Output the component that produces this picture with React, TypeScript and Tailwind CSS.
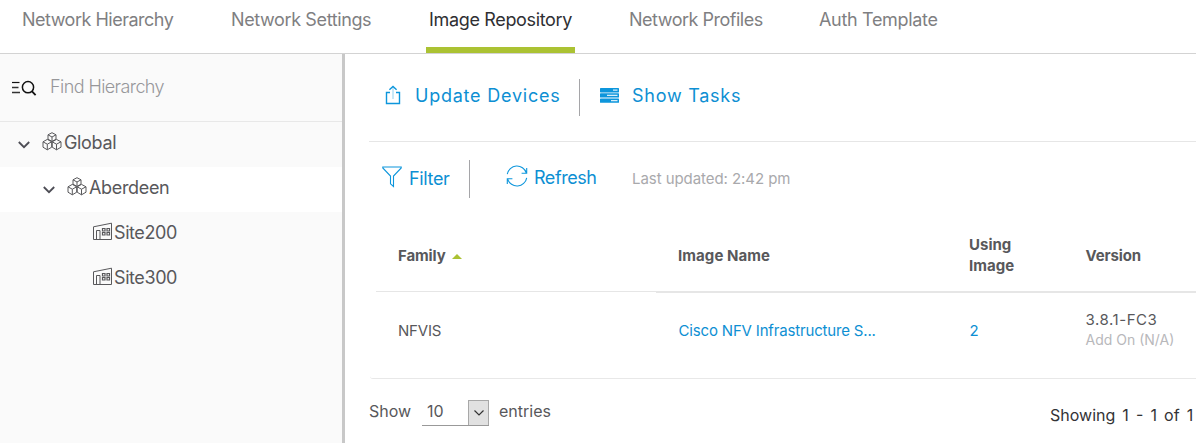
import React from "react";

const tabs = [
  { label: "Network Hierarchy", box: "w-[209px]", tracking: "tracking-[-0.5px]" },
  { label: "Network Settings", box: "w-[198px]", tracking: "tracking-[-0.38px]" },
  { label: "Image Repository", box: "w-[200px]", tracking: "tracking-[-0.34px]", active: true },
  { label: "Network Profiles", box: "w-[190px]", tracking: "tracking-[-0.49px]" },
  { label: "Auth Template", box: "w-[140px]", tracking: "tracking-[-0.32px]" },
];

function SearchListIcon() {
  return (
    <svg width="26" height="18" viewBox="0 0 26 18" fill="none" stroke="#111" strokeWidth="1.5">
      <path d="M1 3.5H8.5" strokeWidth="1.2" />
      <path d="M1 8.5H7.5M1 13.5H9" strokeWidth="1.4" stroke="#333" />
      <circle cx="17" cy="8.2" r="5.6" />
      <path d="M20.8 12.2L24.6 16.2" strokeWidth="1.8" />
    </svg>
  );
}

function CubesIcon() {
  return (
    <svg width="20" height="19" viewBox="0 0 20 19" fill="none" stroke="#58585b" strokeWidth="1" strokeLinejoin="round">
      <path d="M10 .7L14 2.8V7.2L10 9.4L6 7.2V2.8ZM6 2.8L10 5L14 2.8M10 5V9.4" />
      <path d="M5.3 7.4L9.7 9.8V15.2L5.3 17.8L1 15.2V9.8ZM1 9.8L5.3 12.2L9.7 9.8M5.3 12.2V17.8" />
      <path d="M14.5 7.4L19 9.8V15.2L14.5 17.8L10.2 15.2V9.8ZM10.2 9.8L14.5 12.2L19 9.8M14.5 12.2V17.8" />
    </svg>
  );
}

function SiteIcon() {
  return (
    <svg className="ml-px" width="19" height="18" viewBox="0 0 19 18" fill="none" stroke="#58585b" strokeWidth="1">
      <path d="M.5 4.8L18.5 1.2V17.5H.5Z" />
      <path d="M3.5 17.5V8.5H7V17.5" />
      <path d="M9.5 6.5H12V9H9.5ZM14 6.5H16.5V9H14ZM9.5 10.5H12V13H9.5ZM14 10.5H16.5V13H14Z" strokeWidth="1.2" />
    </svg>
  );
}

function Caret() {
  return (
    <svg width="12" height="8" viewBox="0 0 12 8" fill="none" stroke="#4d4d55" strokeWidth="1.8">
      <path d="M.8 1L6 6.2L11.2 1" />
    </svg>
  );
}

function UpdateIcon() {
  return (
    <svg width="16" height="20" viewBox="0 0 16 20" fill="none" stroke="#0d96dc">
      <path d="M5 7.5H1.5V18.5H14.5V7.5H11" strokeWidth="1.4" />
      <path d="M4.4 4.8L8 1.4L11.6 4.8" strokeWidth="1.4" />
      <path d="M8 2V14" strokeWidth="1" strokeOpacity=".45" />
    </svg>
  );
}

function TasksIcon() {
  return (
    <svg width="19" height="15" viewBox="0 0 19 15" fill="#0d96dc">
      <rect width="19" height="4.4" y="0" rx=".6" />
      <rect width="19" height="4.4" y="5.2" rx=".6" />
      <rect width="19" height="4.4" y="10.4" rx=".6" />
      <path d="M13 1.6H17.5V2.8H13ZM7 6.8H17.5V8H7ZM11 12H17.5V13.2H11Z" fill="#d9effa" />
    </svg>
  );
}

function FilterIcon() {
  return (
    <svg width="20" height="22" viewBox="0 0 20 22" fill="none" stroke="#0d96dc" strokeWidth="1.1">
      <path d="M.8 1H19.2V2L11.5 10V20.5L8.5 17.8V10L.8 2Z" />
    </svg>
  );
}

function RefreshIcon() {
  return (
    <svg width="22" height="22" viewBox="0 0 22 22" fill="none" stroke="#0d96dc" strokeWidth="1.1">
      <path d="M1.3 9.2A9.8 9.8 0 0 1 20.3 7.8M20.7 3V8.2H15.6" />
      <path d="M20.7 12.8A9.8 9.8 0 0 1 1.7 14.2M1.3 19V13.8H6.4" />
    </svg>
  );
}

function TreeRow({ label, indent, open, selected, icon, tracking }: {
  label: string; indent: string; open?: boolean; selected?: boolean; icon: React.ReactNode; tracking: string;
}) {
  return (
    <div className={`flex h-[45px] items-center ${indent} ${selected ? "bg-white" : ""}`}>
      {open && <span className="w-[24px] shrink-0"><Caret /></span>}
      <span className="mb-[7px] shrink-0">{icon}</span>
      <span className={`ml-[2px] pb-[4px] text-[18px] leading-6 text-[#58585b] ${tracking}`}>{label}</span>
    </div>
  );
}

export default function App() {
  return (
    <div className="flex h-[443px] w-[1196px] flex-col overflow-hidden whitespace-nowrap bg-white font-['Inter',sans-serif] text-[#58585b]">
      <nav className="flex h-[54px] shrink-0 border-b border-[#d3d3d3] pl-[22px]">
        {tabs.map((t) => (
          <div key={t.label} className={`shrink-0 ${t.box}`}>
            <div className={`flex h-[53px] flex-col ${t.active ? "-ml-[3px] w-[149px] border-b-[6px] border-[#abc233] pl-[3px] text-[#2f2f33]" : "text-[#7f7f82]"}`}>
              <span className={`pt-2 text-[18px] leading-6 ${t.tracking}`}>{t.label}</span>
            </div>
          </div>
        ))}
      </nav>
      <div className="flex min-h-0 flex-1">
        <aside className="w-[345px] shrink-0 border-r-[3px] border-[#c8c8c8] bg-[#fafafa]">
          <div className="flex h-[68px] items-center border-b border-[#e8e8e8] pl-[11px]">
            <SearchListIcon />
            <span className="ml-[13px] pb-[2px] text-[18px] font-light leading-6 tracking-[-0.58px] text-[#97979a]">Find Hierarchy</span>
          </div>
          <TreeRow label="Global" indent="pl-[18px]" open icon={<CubesIcon />} tracking="tracking-[-0.35px]" />
          <TreeRow label="Aberdeen" indent="pl-[43px]" open selected icon={<CubesIcon />} tracking="tracking-[-0.33px]" />
          <TreeRow label="Site200" indent="pl-[92px]" icon={<SiteIcon />} tracking="tracking-[-0.42px]" />
          <TreeRow label="Site300" indent="pl-[92px]" icon={<SiteIcon />} tracking="tracking-[-0.42px]" />
        </aside>
        <main className="min-w-0 flex-1 pl-[24px]">
          <div className="flex h-[88px] items-center border-b border-[#e6e6e6] pl-[16px] text-[#0d8fd3]">
            <span className="mb-[6px] w-[30px]"><UpdateIcon /></span>
            <span className="w-[164px] pb-[3px] text-[18px] leading-6 tracking-[0.77px]">Update Devices</span>
            <span className="h-[37px] w-px bg-[#a5a5a8]" />
            <span className="mb-[5px] ml-[20px] w-[32px]"><TasksIcon /></span>
            <span className="pb-[3px] text-[18px] leading-6 tracking-[0.75px]">Show Tasks</span>
          </div>
          <div className="flex h-[74px] items-center pl-[13px] text-[#0d8fd3]">
            <span className="mb-[5px] w-[27px]"><FilterIcon /></span>
            <span className="w-[60px] text-[18px] leading-6 tracking-[-0.35px]">Filter</span>
            <span className="h-[38px] w-px bg-[#a5a5a8]" />
            <span className="mb-[6px] ml-[36px] w-[28px]"><RefreshIcon /></span>
            <span className="w-[98px] pb-[2px] text-[18px] leading-6 tracking-[-0.45px]">Refresh</span>
            <span className="text-[15px] leading-5 tracking-[-0.06px] text-[#a9a9ac]">Last updated: 2:42 pm</span>
          </div>
          <div className="flex h-[77px] text-[15px] font-bold leading-[21px]">
            <div className="ml-[7px] flex h-[76px] w-[280px] items-center border-b border-[#e6e6e6] pl-[22px] pt-[4px]">
              <span className="w-[54px] tracking-[-0.12px]">Family</span>
              <svg className="mt-[2px]" width="10" height="5" viewBox="0 0 10 5"><path d="M0 5L5 0L10 5Z" fill="#abc233" /></svg>
            </div>
            <div className="flex flex-1 items-center border-b-2 border-[#e6e6e6] pl-[22px] pt-[3px]">
              <span className="w-[291px] tracking-[0.08px]">Image Name</span>
              <span className="w-[116.5px] tracking-[0.02px]">Using<br />Image</span>
              <span className="tracking-[-0.12px]">Version</span>
            </div>
          </div>
          <div className="ml-[1px] flex h-[86px] items-center rounded-bl-[3px] border-b border-[#e8e8e8] pb-[9px] pl-[28px] text-[15px] leading-5">
            <span className="w-[280.5px] tracking-[-0.2px]">NFVIS</span>
            <span className="w-[291px] tracking-[-0.17px] text-[#0d8fd3]">Cisco NFV Infrastructure S...</span>
            <span className="w-[116px] text-[#0d8fd3]">2</span>
            <span className="flex flex-col pb-[2px]">
              <span className="tracking-[0.55px]">3.8.1-FC3</span>
              <span className="text-[14px] text-[#b8b8bb]">Add On (N/A)</span>
            </span>
          </div>
          <div className="flex pt-[21px] text-[16px] leading-6">
            <span className="-mt-px w-[53px] shrink-0">Show</span>
            <span className="flex h-[26px] w-[67px] shrink-0 border-b border-[#999]">
              <span className="-mt-px w-[46px] pl-[5px]">10</span>
              <span className="flex h-[25px] w-[21px] items-center justify-center border border-b-0 border-[#a8a8a8] bg-[#e1e1e1]">
                <svg width="10" height="6" viewBox="0 0 10 6" fill="none" stroke="#333" strokeWidth="1.2"><path d="M.5 .5L5 5L9.5 .5" /></svg>
              </span>
            </span>
            <span className="-mt-px ml-[10px] w-[551px] shrink-0">entries</span>
            <span className="shrink-0 pt-[3px] text-[#333336] [word-spacing:2.6px]">Showing 1 - 1 of 1</span>
          </div>
        </main>
      </div>
    </div>
  );
}
